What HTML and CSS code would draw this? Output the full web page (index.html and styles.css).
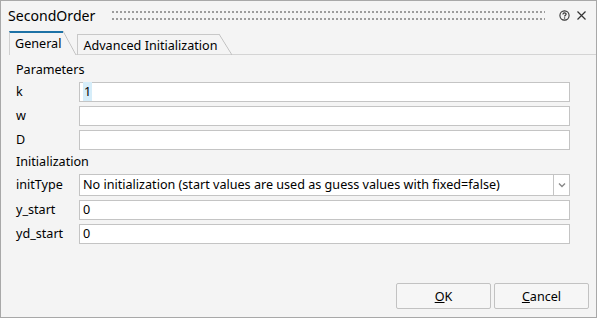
FILE: index.html
```html
<!DOCTYPE html>
<html lang="en">
<head>
    <meta charset="UTF-8">
    <title>SecondOrder</title>
    <link rel="stylesheet" href="styles.css">
</head>
<body>

    <div class="dialog">
        <div class="titlebar">
            <span class="title">SecondOrder</span>
            <div class="grip"></div>
            <svg class="icon" width="11" height="11" viewBox="0 0 11 11">
                <circle cx="5.5" cy="5.5" r="4.6" fill="none" stroke="#333" stroke-width="1.1"/>
                <path d="M3.9 4.4 C3.9 3.4 4.6 2.9 5.5 2.9 C6.4 2.9 7.1 3.4 7.1 4.2 C7.1 5.2 5.6 5.3 5.6 6.4" fill="none" stroke="#333" stroke-width="1.1"/>
                <circle cx="5.6" cy="8" r="0.7" fill="#333"/>
            </svg>
            <svg class="icon" width="11" height="11" viewBox="0 0 11 11">
                <path d="M1.5 1.5 L9.5 9.5 M9.5 1.5 L1.5 9.5" stroke="#333" stroke-width="1.2"/>
            </svg>
        </div>

        <div class="tabs">
            <div class="tab selected">
                <span class="tab-label">General</span>
                <span class="tab-slant"></span>
            </div>
            <div class="tab">
                <span class="tab-label">Advanced Initialization</span>
                <span class="tab-slant"></span>
            </div>
        </div>

        <div class="panel">
            <div class="group">Parameters</div>
            <label>k</label>
            <div class="field"><span class="sel">1</span></div>
            <label>w</label>
            <div class="field"></div>
            <label>D</label>
            <div class="field"></div>

            <div class="group">Initialization</div>
            <label>initType</label>
            <div class="field combo">
                <span class="combo-text">No initialization (start values are used as guess values with fixed=false)</span>
                <span class="combo-btn">
                    <svg width="8" height="6" viewBox="0 0 8 6"><path d="M1 1.5 L4 4.5 L7 1.5" fill="none" stroke="#888" stroke-width="1.4"/></svg>
                </span>
            </div>
            <label>y_start</label>
            <div class="field">0</div>
            <label>yd_start</label>
            <div class="field">0</div>
        </div>

        <div class="buttons">
            <button><u>O</u>K</button>
            <button><u>C</u>ancel</button>
        </div>
    </div>

</body>
</html>
```

FILE: styles.css
```css
body {
    margin: 0;
    font-family: "Noto Sans", Arial, sans-serif;
    font-size: 12.6px;
    color: #000;
}

.dialog {
    width: 597px;
    height: 318px;
    box-sizing: border-box;
    border: 1px solid #a8a8a8;
    background-color: #f4f4f4;
    display: flex;
    flex-direction: column;
}

/* title bar */
.titlebar {
    height: 29px;
    display: flex;
    align-items: center;
    padding: 0 9px 0 7px;
}

.title {
    font-size: 14.1px;
    margin-right: 17px;
}

.grip {
    flex: 1;
    height: 9px;
    margin-right: 8px;
    background-image: linear-gradient(90deg, #9c9c9c 2px, transparent 2px),
                      linear-gradient(90deg, #9c9c9c 2px, transparent 2px);
    background-size: 4px 2px;
    background-position: 0 0, 0 7px;
    background-repeat: repeat-x;
}

.icon {
    margin-left: 6px;
}

/* tabs */
.tabs {
    display: flex;
    align-items: flex-end;
    height: 24px;
    margin-left: 8px;
    border-bottom: 1px solid #d4d4d4;
}

.tab {
    display: flex;
    height: 21px;
    margin-bottom: -1px;
    margin-right: 1px;
}

.tab-label {
    border-top: 1px solid #c8c8c8;
    border-left: 1px solid #c8c8c8;
    padding: 0 2px 0 5px;
    line-height: 21px;
}

.tab-slant {
    width: 13px;
    background: linear-gradient(to top right, transparent calc(50% - 0.8px), #c0c0c0 50%, transparent calc(50% + 0.8px));
}

.tab.selected {
    height: 24px;
    background-color: #f4f4f4;
}

.tab.selected .tab-label {
    border-top: 2px solid #1d72a6;
    border-left-color: #d0d0d0;
    line-height: 22px;
    padding-left: 5px;
}

/* parameter rows */
.panel {
    display: grid;
    grid-template-columns: 63px 491px;
    row-gap: 4px;
    padding: 7px 0 0 15px;
    align-items: center;
}

.group {
    grid-column: 1 / 3;
    height: 16px;
    line-height: 16px;
}

.panel label {
    line-height: 20px;
}

.field {
    height: 20px;
    box-sizing: border-box;
    border: 1px solid #c4c4c4;
    background-color: #fff;
    padding-left: 3px;
    line-height: 18px;
}

.sel {
    background-color: #d6edf9;
    padding: 1px 1px;
}

.combo {
    height: 22px;
    display: flex;
    padding-right: 0;
    line-height: 20px;
}

.combo-text {
    flex: 1;
    white-space: nowrap;
    overflow: hidden;
}

.combo-btn {
    width: 15px;
    border-left: 1px solid #c4c4c4;
    display: flex;
    align-items: center;
    justify-content: center;
}

/* buttons */
.buttons {
    margin-top: auto;
    display: flex;
    justify-content: flex-end;
    gap: 3px;
    padding: 0 7px 8px 0;
}

.buttons button {
    width: 95px;
    height: 26px;
    font-family: inherit;
    font-size: 12.6px;
    color: #000;
    background-color: #f6f6f6;
    border: 1px solid #c2c2c2;
    border-radius: 2px;
}
```
